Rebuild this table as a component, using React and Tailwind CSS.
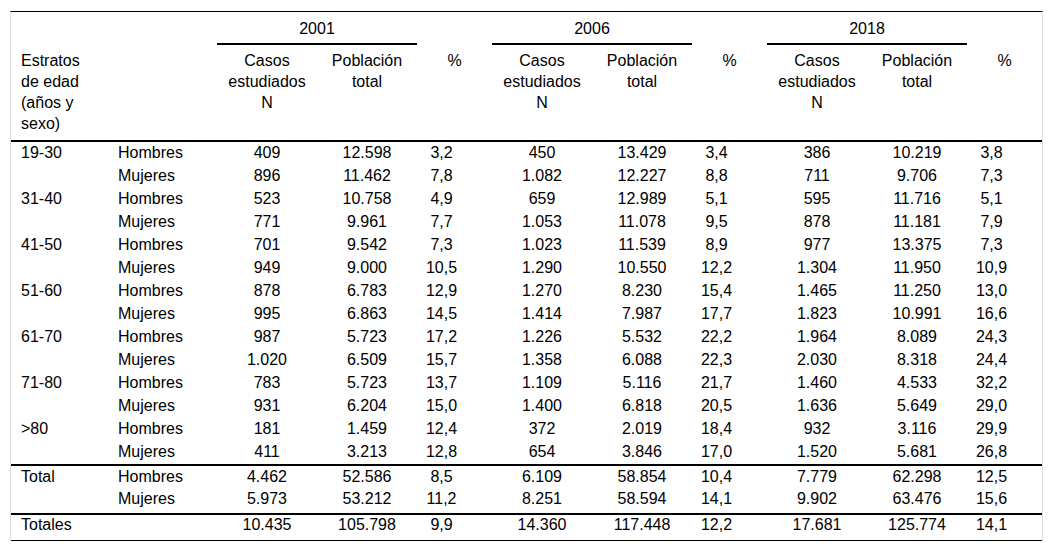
import React from 'react';

const groups = [
  {
    label: '19-30',
    rows: [
      ['Hombres', '409', '12.598', '3,2', '450', '13.429', '3,4', '386', '10.219', '3,8'],
      ['Mujeres', '896', '11.462', '7,8', '1.082', '12.227', '8,8', '711', '9.706', '7,3'],
    ],
  },
  {
    label: '31-40',
    rows: [
      ['Hombres', '523', '10.758', '4,9', '659', '12.989', '5,1', '595', '11.716', '5,1'],
      ['Mujeres', '771', '9.961', '7,7', '1.053', '11.078', '9,5', '878', '11.181', '7,9'],
    ],
  },
  {
    label: '41-50',
    rows: [
      ['Hombres', '701', '9.542', '7,3', '1.023', '11.539', '8,9', '977', '13.375', '7,3'],
      ['Mujeres', '949', '9.000', '10,5', '1.290', '10.550', '12,2', '1.304', '11.950', '10,9'],
    ],
  },
  {
    label: '51-60',
    rows: [
      ['Hombres', '878', '6.783', '12,9', '1.270', '8.230', '15,4', '1.465', '11.250', '13,0'],
      ['Mujeres', '995', '6.863', '14,5', '1.414', '7.987', '17,7', '1.823', '10.991', '16,6'],
    ],
  },
  {
    label: '61-70',
    rows: [
      ['Hombres', '987', '5.723', '17,2', '1.226', '5.532', '22,2', '1.964', '8.089', '24,3'],
      ['Mujeres', '1.020', '6.509', '15,7', '1.358', '6.088', '22,3', '2.030', '8.318', '24,4'],
    ],
  },
  {
    label: '71-80',
    rows: [
      ['Hombres', '783', '5.723', '13,7', '1.109', '5.116', '21,7', '1.460', '4.533', '32,2'],
      ['Mujeres', '931', '6.204', '15,0', '1.400', '6.818', '20,5', '1.636', '5.649', '29,0'],
    ],
  },
  {
    label: '>80',
    rows: [
      ['Hombres', '181', '1.459', '12,4', '372', '2.019', '18,4', '932', '3.116', '29,9'],
      ['Mujeres', '411', '3.213', '12,8', '654', '3.846', '17,0', '1.520', '5.681', '26,8'],
    ],
  },
];

const totals = [
  ['Total', 'Hombres', '4.462', '52.586', '8,5', '6.109', '58.854', '10,4', '7.779', '62.298', '12,5'],
  ['', 'Mujeres', '5.973', '53.212', '11,2', '8.251', '58.594', '14,1', '9.902', '63.476', '15,6'],
];

const grand = ['Totales', '', '10.435', '105.798', '9,9', '14.360', '117.448', '12,2', '17.681', '125.774', '14,1'];

// percent columns sit a bit left of their header
const isPct = (i) => i === 4 || i === 7 || i === 10;

function Cells({ values, extra = '' }) {
  return values.map((v, i) => (
    <td
      key={i}
      className={
        i === 0
          ? `p-0 pl-[10px] text-left align-top ${extra}`
          : i === 1
          ? `p-0 pl-[8px] text-left align-top ${extra}`
          : isPct(i)
          ? `p-0 pr-[26px] text-center align-top ${extra}`
          : `p-0 text-center align-top ${extra}`
      }
    >
      {v}
    </td>
  ));
}

export default function App() {
  return (
    <div className="w-[1053px] h-[553px] bg-white pt-[11px] pl-[10px] font-['Liberation_Sans',Arial,sans-serif] text-[16px] text-black">
      <table className="table-fixed w-[1033px] border-separate border-spacing-0 border-t border-x border-[#dcdcdc] border-t-black">
        <colgroup>
          <col className="w-[99px]" />
          <col className="w-[107px]" />
          <col className="w-[100px]" />
          <col className="w-[100px]" />
          <col className="w-[75px]" />
          <col className="w-[100px]" />
          <col className="w-[100px]" />
          <col className="w-[75px]" />
          <col className="w-[100px]" />
          <col className="w-[100px]" />
          <col className="w-[75px]" />
        </colgroup>
        <thead className="leading-[21px] font-normal">
          <tr>
            <th colSpan={2} className="p-0 h-[33px]" />
            <th colSpan={2} className="p-0 pt-[6px] pb-[4px] font-normal text-center align-top border-b-2 border-black">2001</th>
            <th className="p-0" />
            <th colSpan={2} className="p-0 pt-[6px] pb-[4px] font-normal text-center align-top border-b-2 border-black">2006</th>
            <th className="p-0" />
            <th colSpan={2} className="p-0 pt-[6px] pb-[4px] font-normal text-center align-top border-b-2 border-black">2018</th>
            <th className="p-0" />
          </tr>
          <tr>
            <th className="p-0 pl-[10px] pt-[5px] h-[97px] font-normal text-left align-top border-b-2 border-black">
              Estratos<br />de edad<br />(años y<br />sexo)
            </th>
            <th className="p-0 border-b-2 border-black" />
            {['2001', '2006', '2018'].map((y) => (
              <React.Fragment key={y}>
                <th className="p-0 pt-[5px] font-normal text-center align-top border-b-2 border-black">
                  Casos<br />estudiados<br />N
                </th>
                <th className="p-0 pt-[5px] font-normal text-center align-top border-b-2 border-black">
                  Población<br />total
                </th>
                <th className="p-0 pt-[5px] font-normal text-center align-top border-b-2 border-black">%</th>
              </React.Fragment>
            ))}
          </tr>
        </thead>
        <tbody className="leading-[18px]">
          {groups.map((g) =>
            g.rows.map((r, k) => (
              <tr key={g.label + k} className="h-[23px]">
                <Cells values={[k === 0 ? g.label : '', ...r]} extra="pt-[2px]" />
              </tr>
            ))
          )}
          <tr className="h-[24px]">
            <Cells values={totals[0]} extra="pt-[2px] border-t-2 border-black" />
          </tr>
          <tr className="h-[25px]">
            <Cells values={totals[1]} extra="pt-[2px]" />
          </tr>
          <tr className="h-[28px]">
            <Cells values={grand} extra="pt-[1px] border-t-2 border-b border-black" />
          </tr>
        </tbody>
      </table>
    </div>
  );
}
